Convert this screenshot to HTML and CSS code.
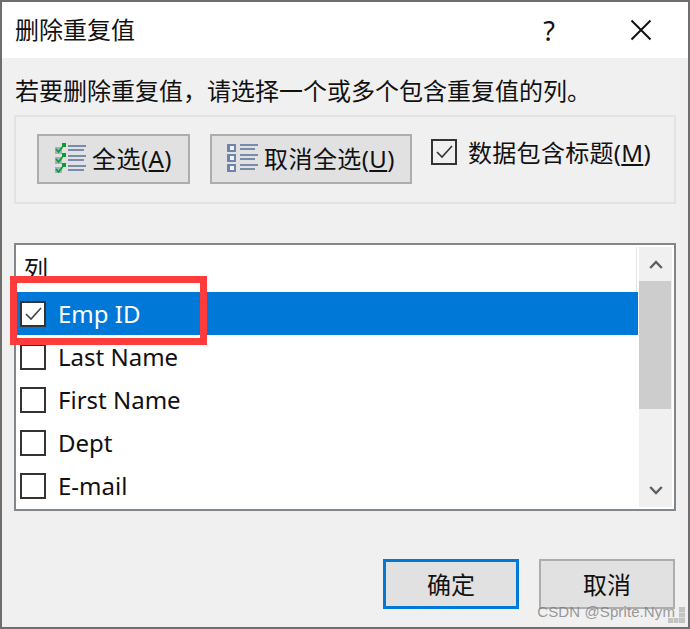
FILE: index.html
```html
<!DOCTYPE html>
<html lang="zh">
<head>
<meta charset="utf-8">
<title>删除重复值</title>
<link rel="stylesheet" href="styles.css">
</head>
<body>
<div class="dialog">
  <header class="titlebar">
    <span class="title">删除重复值</span>
    <span class="help">?</span>
    <svg class="close" width="22" height="22" viewBox="0 0 22 22"><path d="M1.5 1.5 20.5 20.5M20.5 1.5 1.5 20.5" stroke="#111" stroke-width="2" fill="none"/></svg>
  </header>
  <main class="body">
    <p class="desc">若要删除重复值，请选择一个或多个包含重复值的列。</p>
    <section class="group">
      <button class="btn tool sel-all">
        <svg width="31" height="30" viewBox="0 0 31 30">
          <g fill="#9fb0c6"><rect x="0" y="4" width="7" height="7"/><rect x="0" y="14" width="7" height="7"/><rect x="0" y="24" width="7" height="6"/></g>
          <g fill="#0f9b2e"><rect x="7" y="0" width="4" height="4"/><rect x="7" y="10" width="4" height="4"/><rect x="7" y="20" width="4" height="4"/></g>
          <g stroke="#0f9b2e" stroke-width="1.7" fill="none"><path d="M1 6 3.5 9 7.5 4M1 16 3.5 19 7.5 14M1 26 3.5 29 7.5 24"/></g>
          <g stroke="#7a8cab" stroke-width="2"><path d="M13 3H31M13 7H29M13 13H31M13 17H29M13 23H31M13 27H29"/></g>
        </svg>
        <span>全选(<u>A</u>)</span>
      </button>
      <button class="btn tool unsel-all">
        <svg width="31" height="28" viewBox="0 0 31 28">
          <g fill="#7083aa"><rect x="0" y="0" width="9" height="8"/><rect x="0" y="10" width="9" height="8"/><rect x="0" y="20" width="9" height="8"/></g>
          <g fill="#eef1f6"><rect x="3" y="2" width="4" height="4"/><rect x="3" y="12" width="4" height="4"/><rect x="3" y="22" width="4" height="4"/></g>
          <g stroke="#7a8cab" stroke-width="2"><path d="M13 1H31M13 5H28M13 11H31M13 15H28M13 21H31M13 25H28"/></g>
        </svg>
        <span>取消全选(<u>U</u>)</span>
      </button>
      <label class="header-check">
        <span class="box box-on"><svg width="17" height="15" viewBox="0 0 17 15"><path d="M1 8 6 13 16 2" stroke="#333" stroke-width="1.6" fill="none"/></svg></span>
        <span>数据包含标题(<u>M</u>)</span>
      </label>
    </section>
    <section class="list">
      <div class="rows">
        <div class="list-head">列</div>
        <div class="row selected">
          <span class="box"><svg width="17" height="15" viewBox="0 0 17 15"><path d="M1 8 6 13 16 2" stroke="#444" stroke-width="1.6" fill="none"/></svg></span>
          <span>Emp ID</span>
        </div>
        <div class="row"><span class="box"></span><span>Last Name</span></div>
        <div class="row"><span class="box"></span><span>First Name</span></div>
        <div class="row"><span class="box"></span><span>Dept</span></div>
        <div class="row"><span class="box"></span><span>E-mail</span></div>
      </div>
      <div class="scrollbar">
        <div class="arrow"><svg width="14" height="9" viewBox="0 0 14 9"><path d="M1.2 8 7 2 12.8 8" stroke="#5f5f5f" stroke-width="2.4" fill="none"/></svg></div>
        <div class="thumb"></div>
        <div class="track"></div>
        <div class="arrow"><svg width="14" height="9" viewBox="0 0 14 9"><path d="M1.2 1 7 7 12.8 1" stroke="#5f5f5f" stroke-width="2.4" fill="none"/></svg></div>
      </div>
      <div class="highlight"></div>
    </section>
    <footer class="footer">
      <button class="btn action primary">确定</button>
      <button class="btn action">取消</button>
    </footer>
  </main>
  <div class="watermark">CSDN @Sprite.Nym</div>
  <svg class="watermark-dots" width="17" height="16" viewBox="0 0 17 16"><g fill="#b4b4b4" fill-opacity=".75"><rect x="11" y="0" width="6" height="5"/><rect x="11" y="5.500" width="6" height="5"/><rect x="0" y="11" width="5" height="5"/><rect x="5.500" y="11" width="5" height="5"/><rect x="11" y="11" width="6" height="5"/></g></svg>
</div>
</body>
</html>
```

FILE: styles.css
```css
* { box-sizing: border-box; }
html, body { margin: 0; padding: 0; }
body {
  width: 690px;
  height: 629px;
  background: #6e6e6e;
  padding: 2px;
  overflow: hidden;
  font-family: "Noto Sans", "Noto Sans CJK SC", sans-serif;
  color: #111;
}
.dialog {
  position: relative;
  width: 686px;
  height: 625px;
  background: #f0f0f0;
  display: flex;
  flex-direction: column;
}
.titlebar {
  height: 56px;
  background: #fff;
  display: flex;
  align-items: center;
  padding-left: 13px;
  flex: none;
}
.title { font-size: 24px; line-height: 56px; flex: 1; }
.help { font-size: 27px; line-height: 1; margin-right: 75px; }
.close { margin-right: 36px; }
.body { flex: 1; padding: 0 10px 0 12px; display: flex; flex-direction: column; }
.desc {
  margin: 0;
  height: 57px;
  padding-top: 13px;
  padding-left: 1px;
  font-size: 24px;
  line-height: 40px;
  white-space: nowrap;
}
.group {
  height: 89px;
  width: 662px;
  border: 2px solid #e3e3e3;
  display: flex;
  align-items: flex-start;
  padding: 17px 0 0 21px;
  flex: none;
}
.btn {
  font-family: inherit;
  color: #111;
  background: #e1e1e1;
  border: 2px solid #adadad;
  border-radius: 0;
  padding: 0 0 1px;
  font-size: 24px;
  height: 50px;
  display: flex;
  align-items: center;
  justify-content: center;
}
.tool { gap: 6px; padding-bottom: 3px; letter-spacing: 0.4px; }
.sel-all { width: 153px; margin-right: 20px; }
.unsel-all { width: 202px; margin-right: 19px; }
.box {
  width: 26px;
  height: 26px;
  border: 2px solid #333;
  background: #fff;
  display: flex;
  align-items: center;
  justify-content: center;
  flex: none;
}
.header-check {
  display: flex;
  align-items: center;
  gap: 11px;
  font-size: 24px;
  height: 35px;
  letter-spacing: 0.3px;
  white-space: nowrap;
}
.box-on { background: transparent; }
.list {
  position: relative;
  margin-top: 39px;
  width: 662px;
  height: 268px;
  border: 2px solid #82878c;
  background: #fff;
  display: flex;
  flex: none;
}
.rows { flex: 1; min-width: 0; overflow: hidden; margin-top: 2px; }
.list-head {
  height: 45px;
  padding: 2px 0 0 8px;
  font-size: 24px;
  line-height: 40px;
  border-right: 1px solid #e5e5e5;
  margin-right: 1px;
}
.row {
  height: 43px;
  display: flex;
  align-items: center;
  gap: 12px;
  padding-left: 4px;
  font-size: 24px;
  white-space: nowrap;
}
.row.selected { background: #0078d7; color: #fff; }
.scrollbar {
  width: 33px;
  margin: 2px 2px 2px 1px;
  background: #f0f0f0;
  display: flex;
  flex-direction: column;
  flex: none;
}
.arrow { height: 34px; display: flex; align-items: center; justify-content: center; flex: none; }
.thumb { height: 128px; width: 32px; background: #cdcdcd; flex: none; }
.track { flex: 1; }
.highlight {
  position: absolute;
  left: -6px;
  top: 31px;
  width: 197px;
  height: 69px;
  border: 7px solid #ff3b3b;
  pointer-events: none;
}
.footer { display: flex; gap: 20px; justify-content: flex-end; padding: 48px 1px 0 0; width: 662px; }
.action { width: 136px; }
.primary { border: 3px solid #0078d7; }
.watermark {
  position: absolute;
  right: 13px;
  bottom: 7px;
  font-family: "Liberation Sans", sans-serif;
  font-size: 15px;
  letter-spacing: 0.1px;
  color: rgba(120,120,120,0.75);
  white-space: nowrap;
}
.watermark-dots { position: absolute; right: 3px; bottom: 4px; }
```
